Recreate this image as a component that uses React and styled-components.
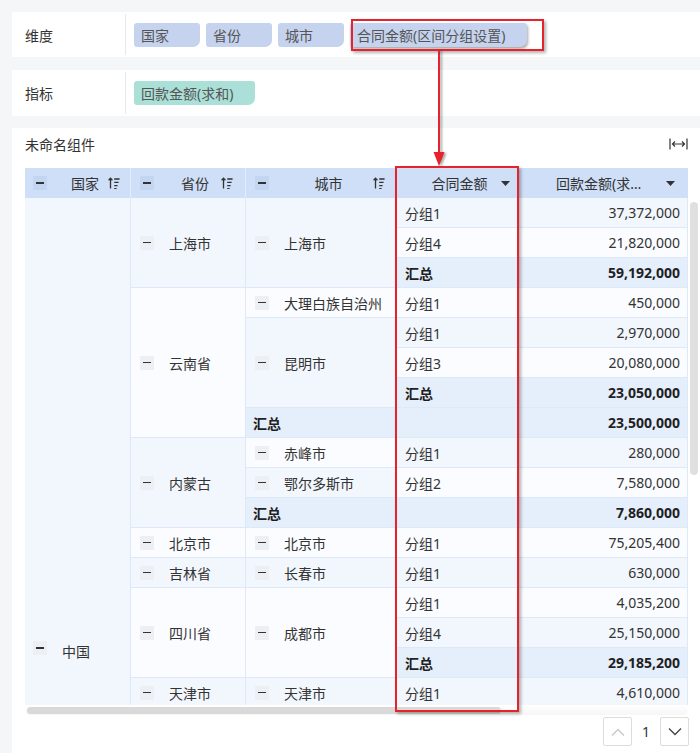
import React from 'react';
import styled, { createGlobalStyle } from 'styled-components';

const GlobalStyle = createGlobalStyle`
  html, body {
    margin: 0;
    padding: 0;
    background: #f5f6f8;
    font-family: "Noto Sans", "Noto Sans CJK SC", sans-serif;
    font-size: 14px;
    color: #333;
  }
`;

const Page = styled.div`
  position: relative;
  width: 700px;
  height: 753px;
  box-sizing: border-box;
  padding: 12px 0 0 12px;
  display: flex;
  flex-direction: column;
  overflow: hidden;
`;

const FieldPanel = styled.div`
  display: flex;
  height: ${(p) => p.$height}px;
  margin-bottom: ${(p) => p.$gap}px;
  background: #fff;
`;

const FieldLabel = styled.div`
  width: 114px;
  padding-left: 13px;
  box-sizing: border-box;
  display: flex;
  align-items: center;
  border-right: 1px solid #e6e8ec;
  margin: 2px 0;
  color: #333;
`;

const TagList = styled.div`
  display: flex;
  align-items: center;
  gap: 6px;
  padding-left: 8px;
`;

const Tag = styled.div`
  height: 24px;
  min-width: 66px;
  box-sizing: border-box;
  padding: 0 22px 0 7px;
  display: flex;
  align-items: center;
  background: ${(p) => (p.$metric ? '#abe0d8' : '#c5d3ef')};
  color: #555;
  border-radius: 3px 3px 7px 3px;
  box-shadow: ${(p) => (p.$dragging ? '1px 2px 3px rgba(0,0,0,0.35)' : 'none')};
  white-space: nowrap;
`;

const ChartPanel = styled.div`
  flex: 1;
  background: #fff;
  display: flex;
  flex-direction: column;
  padding-left: 13px;
`;

const TitleRow = styled.div`
  display: flex;
  align-items: center;
  justify-content: space-between;
  height: 20px;
  padding: 6px 12px 0 0;
  margin-bottom: 14px;
  color: #333;
`;

const Table = styled.div`
  width: 675px;
  display: flex;
  flex-direction: column;
`;

const COLS = '106px 115px 150px 122px 170px';

const HeaderRow = styled.div`
  display: grid;
  grid-template-columns: ${COLS};
  width: 663px;
  height: 30px;
  background: #cedff7;
`;

const HeaderCell = styled.div`
  display: flex;
  align-items: center;
  padding: 0 ${(p) => p.$padRight}px 0 ${(p) => p.$padLeft}px;
  border-right: 1px solid #e3ecfa;
  box-sizing: border-box;
  min-width: 0;
  &:last-child {
    border-right: none;
  }
`;

const HeaderLabel = styled.span`
  flex: ${(p) => (p.$width ? 'none' : 1)};
  width: ${(p) => (p.$width ? p.$width + 'px' : 'auto')};
  margin-right: ${(p) => (p.$width ? 'auto' : 0)};
  text-align: center;
  white-space: nowrap;
  overflow: hidden;
  text-overflow: ellipsis;
  color: #333;
`;

const BodyRow = styled.div`
  display: flex;
  height: 507px;
`;

const Body = styled.div`
  display: grid;
  grid-template-columns: ${COLS};
  grid-auto-rows: 30px;
  width: 663px;
  height: 507px;
  overflow: hidden;
`;

const Cell = styled.div`
  grid-column: ${(p) => p.$col} / span ${(p) => p.$colSpan || 1};
  grid-row: ${(p) => p.$row} / span ${(p) => p.$span || 1};
  display: flex;
  align-items: center;
  justify-content: ${(p) => (p.$right ? 'flex-end' : 'flex-start')};
  box-sizing: border-box;
  padding: 0 ${(p) => (p.$right ? 7 : 0)}px 0 ${(p) => p.$padLeft || 0}px;
  background: ${(p) => (p.$total ? '#e5eefb' : p.$tone ? '#f2f6fd' : '#fafcff')};
  border-right: 1px solid #dde8f8;
  border-bottom: 1px solid #dde8f8;
  font-weight: ${(p) => (p.$total ? 700 : 400)};
  color: ${(p) => (p.$total ? '#1f1f1f' : '#333')};
  white-space: nowrap;
`;

const CountryCell = styled(Cell)`
  align-items: flex-start;
  padding-top: 443px;
  background: #f2f6fd;
`;

const Collapse = styled.span`
  width: 14px;
  height: 14px;
  flex: none;
  margin-right: 15px;
  background: ${(p) => (p.$head ? '#c3d6f1' : '#eceff4')};
  display: flex;
  align-items: center;
  justify-content: center;
  &::before {
    content: '';
    width: 8px;
    height: 1.6px;
    background: #333;
  }
`;

const VScroll = styled.div`
  width: 12px;
  display: flex;
  justify-content: center;
  padding-top: 4px;
`;

const VThumb = styled.div`
  width: 8px;
  height: 273px;
  border-radius: 4px;
  background: #e0e0e0;
`;

const HScroll = styled.div`
  height: 10px;
  width: 663px;
  display: flex;
  align-items: center;
  padding-left: 2px;
  box-sizing: border-box;
  background: linear-gradient(#fff, #f6f6f6);
  border-radius: 5px;
`;

const HThumb = styled.div`
  width: 474px;
  height: 7px;
  border-radius: 4px;
  background: #d9d9d9;
`;

const Pager = styled.div`
  display: flex;
  align-items: center;
  justify-content: flex-end;
  padding-right: 11px;
  margin-top: 2px;
`;

const PageButton = styled.div`
  width: 29px;
  height: 29px;
  box-sizing: border-box;
  border: 1px solid #dcdcdc;
  border-radius: 2px;
  display: flex;
  align-items: center;
  justify-content: center;
  background: #fff;
`;

const PageNumber = styled.span`
  width: 28px;
  text-align: center;
  color: #333;
`;

const RedBox = styled.div`
  position: absolute;
  left: ${(p) => p.$x}px;
  top: ${(p) => p.$y}px;
  width: ${(p) => p.$w}px;
  height: ${(p) => p.$h}px;
  box-sizing: border-box;
  border: 2px solid #e6232b;
  box-shadow: 2px 2px 3px rgba(0, 0, 0, 0.3);
  pointer-events: none;
`;

const ArrowSvg = styled.svg`
  position: absolute;
  left: 430px;
  top: 50px;
  filter: drop-shadow(2px 1px 1px rgba(0, 0, 0, 0.35));
`;

const SortIcon = () => (
  <svg width="12" height="12" viewBox="0 0 12 12" fill="none" stroke="#333" strokeWidth="1.3">
    <path d="M2.5 11.5V1.2M0.6 3.3L2.5 1.2L4.4 3.3" />
    <path d="M6.2 2H11.6M6.2 5.3H10.6M6.2 8.6H9.6M6.2 11.6H8.6" />
  </svg>
);

const Caret = () => (
  <svg width="9" height="5" viewBox="0 0 9 5">
    <path d="M0 0H9L4.5 5Z" fill="#333" />
  </svg>
);

const FitIcon = () => (
  <svg width="19" height="12" viewBox="0 0 19 12" fill="none" stroke="#333" strokeWidth="1.2">
    <path d="M1 0.5V11.5M18 0.5V11.5M3.5 6H15.5M6 3.5L3.5 6L6 8.5M13 3.5L15.5 6L13 8.5" />
  </svg>
);

const Chevron = ({ up, color }) => (
  <svg width="14" height="8" viewBox="0 0 14 8" fill="none" stroke={color} strokeWidth="1.3">
    <path d={up ? 'M1 7.5L7 1.5L13 7.5' : 'M1 0.5L7 6.5L13 0.5'} />
  </svg>
);

const provinces = [
  { name: '上海市', row: 1, span: 3 },
  { name: '云南省', row: 4, span: 5 },
  { name: '内蒙古', row: 9, span: 3 },
  { name: '北京市', row: 12, span: 1 },
  { name: '吉林省', row: 13, span: 1 },
  { name: '四川省', row: 14, span: 3 },
  { name: '天津市', row: 17, span: 1 },
];

const cities = [
  { name: '上海市', row: 1, span: 3 },
  { name: '大理白族自治州', row: 4, span: 1 },
  { name: '昆明市', row: 5, span: 3 },
  { name: '赤峰市', row: 9, span: 1 },
  { name: '鄂尔多斯市', row: 10, span: 1 },
  { name: '北京市', row: 12, span: 1 },
  { name: '长春市', row: 13, span: 1 },
  { name: '成都市', row: 14, span: 3 },
  { name: '天津市', row: 17, span: 1 },
];

const values = [
  { row: 1, group: '分组1', value: '37,372,000' },
  { row: 2, group: '分组4', value: '21,820,000' },
  { row: 3, group: '汇总', value: '59,192,000', total: true },
  { row: 4, group: '分组1', value: '450,000' },
  { row: 5, group: '分组1', value: '2,970,000' },
  { row: 6, group: '分组3', value: '20,080,000' },
  { row: 7, group: '汇总', value: '23,050,000', total: true },
  { row: 8, group: '汇总', value: '23,500,000', total: true, wide: true },
  { row: 9, group: '分组1', value: '280,000' },
  { row: 10, group: '分组2', value: '7,580,000' },
  { row: 11, group: '汇总', value: '7,860,000', total: true, wide: true },
  { row: 12, group: '分组1', value: '75,205,400' },
  { row: 13, group: '分组1', value: '630,000' },
  { row: 14, group: '分组1', value: '4,035,200' },
  { row: 15, group: '分组4', value: '25,150,000' },
  { row: 16, group: '汇总', value: '29,185,200', total: true },
  { row: 17, group: '分组1', value: '4,610,000' },
];

const App = () => {
  return (
    <Page>
      <GlobalStyle />

      <FieldPanel $height={45} $gap={13}>
        <FieldLabel>维度</FieldLabel>
        <TagList>
          <Tag>国家</Tag>
          <Tag>省份</Tag>
          <Tag>城市</Tag>
          <Tag $dragging>合同金额(区间分组设置)</Tag>
        </TagList>
      </FieldPanel>

      <FieldPanel $height={46} $gap={12}>
        <FieldLabel>指标</FieldLabel>
        <TagList>
          <Tag $metric>回款金额(求和)</Tag>
        </TagList>
      </FieldPanel>

      <ChartPanel>
        <TitleRow>
          <span>未命名组件</span>
          <FitIcon />
        </TitleRow>

        <Table>
          <HeaderRow>
            <HeaderCell $padLeft={8} $padRight={10}>
              <Collapse $head />
              <HeaderLabel>国家</HeaderLabel>
              <SortIcon />
            </HeaderCell>
            <HeaderCell $padLeft={9} $padRight={12}>
              <Collapse $head />
              <HeaderLabel>省份</HeaderLabel>
              <SortIcon />
            </HeaderCell>
            <HeaderCell $padLeft={9} $padRight={10}>
              <Collapse $head />
              <HeaderLabel>城市</HeaderLabel>
              <SortIcon />
            </HeaderCell>
            <HeaderCell $padLeft={22} $padRight={7}>
              <HeaderLabel>合同金额</HeaderLabel>
              <Caret />
            </HeaderCell>
            <HeaderCell $padLeft={38} $padRight={13}>
              <HeaderLabel $width={86}>回款金额(求和)</HeaderLabel>
              <Caret />
            </HeaderCell>
          </HeaderRow>

          <BodyRow>
            <Body>
              <CountryCell $col={1} $row={1} $span={30} $padLeft={8}>
                <Collapse />
                中国
              </CountryCell>

              {provinces.map((p, i) => (
                <Cell key={'p' + p.row} $col={2} $row={p.row} $span={p.span} $padLeft={9} $tone={i % 2 === 0}>
                  <Collapse />
                  {p.name}
                </Cell>
              ))}

              {cities.map((c, i) => (
                <Cell key={'c' + c.row} $col={3} $row={c.row} $span={c.span} $padLeft={9} $tone={i % 2 === 0}>
                  <Collapse />
                  {c.name}
                </Cell>
              ))}

              {values.map((v) => (
                <React.Fragment key={'v' + v.row}>
                  <Cell
                    $col={v.wide ? 3 : 4}
                    $colSpan={v.wide ? 2 : 1}
                    $row={v.row}
                    $padLeft={v.wide ? 7 : 9}
                    $total={v.total}
                    $tone={v.row % 2 === 1}
                  >
                    {v.group}
                  </Cell>
                  <Cell $col={5} $row={v.row} $right $total={v.total} $tone={v.row % 2 === 1}>
                    {v.value}
                  </Cell>
                </React.Fragment>
              ))}
            </Body>
            <VScroll>
              <VThumb />
            </VScroll>
          </BodyRow>

          <HScroll>
            <HThumb />
          </HScroll>
        </Table>

        <Pager>
          <PageButton>
            <Chevron up color="#c8c8c8" />
          </PageButton>
          <PageNumber>1</PageNumber>
          <PageButton>
            <Chevron color="#444" />
          </PageButton>
        </Pager>
      </ChartPanel>

      {/* red annotation marks over the page */}
      <RedBox $x={351} $y={19} $w={193} $h={32} />
      <ArrowSvg width="20" height="118" viewBox="0 0 20 118">
        <path d="M9 0V104" stroke="#e6232b" strokeWidth="2" />
        <path d="M3.5 102H14.5L9 116Z" fill="#e6232b" />
      </ArrowSvg>
      <RedBox $x={395} $y={166} $w={124} $h={546} />
    </Page>
  );
};

export default App;
